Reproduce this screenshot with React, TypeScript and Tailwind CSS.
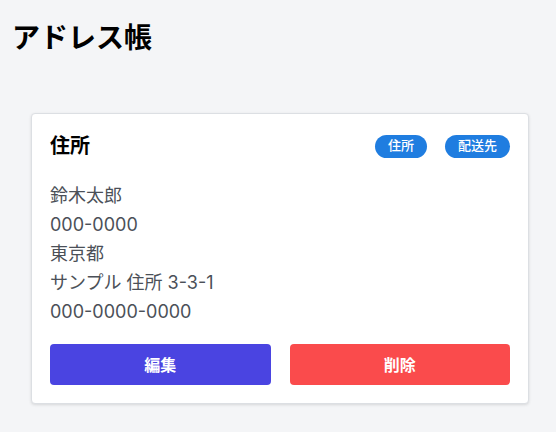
import React from "react";

const font = { fontFamily: 'Inter, "Noto Sans CJK JP", "Noto Sans", sans-serif' };

export default function App() {
  return (
    <div className="min-h-screen bg-[#f4f5f7] px-3 pt-[19px]" style={font}>
      <h1 className="text-[28px] font-bold leading-[39px] text-black">アドレス帳</h1>
      <div className="mt-[55px] ml-[19px] w-[498px] rounded border border-[#dcdfe3] bg-white p-[18px] shadow-[0_1px_3px_rgba(0,0,0,0.12)]">
        <div className="flex h-[28px] items-center justify-between">
          <h2 className="text-[20px] font-bold leading-[28px] text-black">住所</h2>
          <div className="flex items-center gap-[18px]">
            <span className="flex h-[23px] items-center rounded-full bg-[#1f7de0] px-[13px] text-[13px] font-medium text-white">住所</span>
            <span className="flex h-[23px] items-center rounded-full bg-[#1f7de0] px-[13px] text-[13px] font-medium text-white">配送先</span>
          </div>
        </div>
        <div className="mt-[21px] text-[18px] leading-[29px] text-[#4b5058]">
          <p>鈴木太郎</p>
          <p>000-0000</p>
          <p>東京都</p>
          <p>サンプル 住所 3-3-1</p>
          <p>000-0000-0000</p>
        </div>
        <div className="mt-[18px] grid grid-cols-2 gap-[19px]">
          <button className="h-[41px] rounded bg-[#4a44e1] text-[16px] font-bold text-white">編集</button>
          <button className="h-[41px] rounded bg-[#fa4b4c] text-[16px] font-bold text-white">削除</button>
        </div>
      </div>
    </div>
  );
}
